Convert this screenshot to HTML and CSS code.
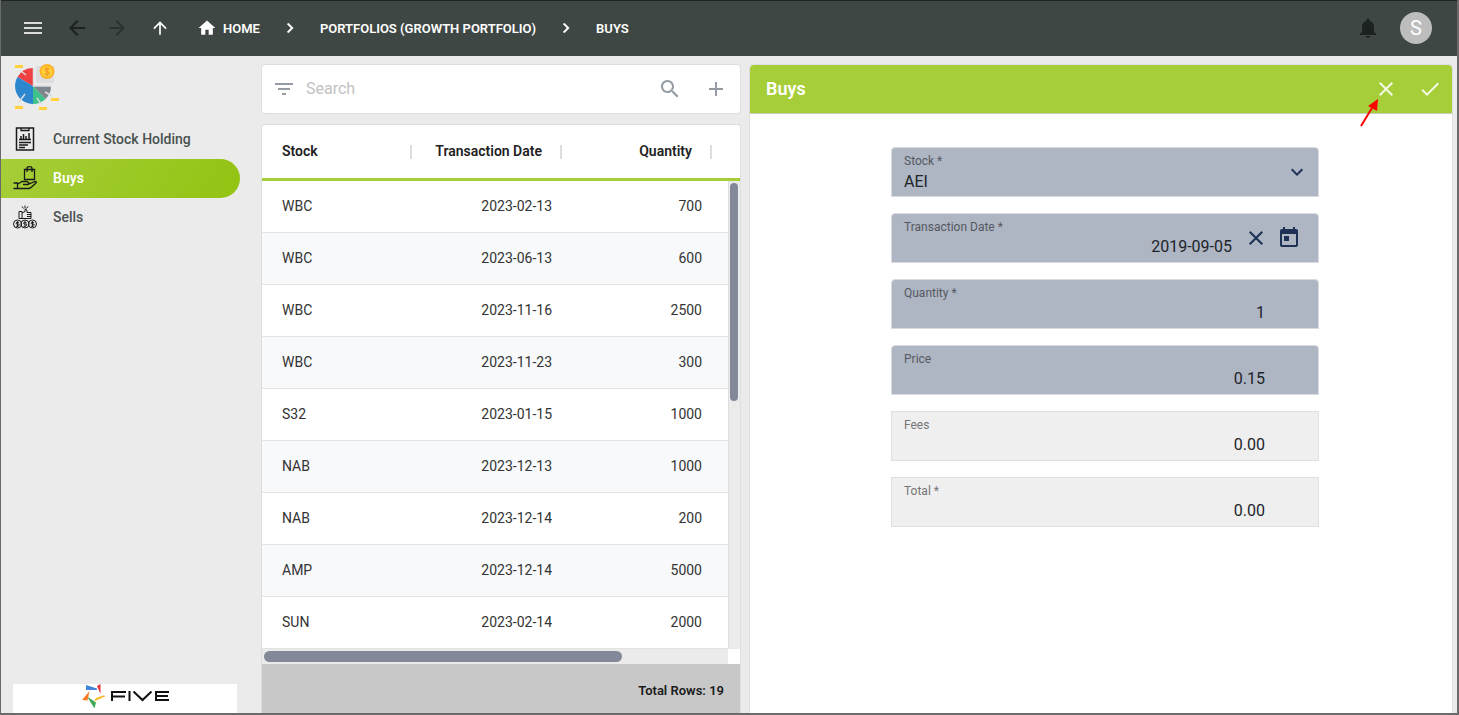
FILE: index.html
```html
<!DOCTYPE html>
<html lang="en">
<head>
<meta charset="utf-8">
<title>Buys</title>
<link rel="stylesheet" href="styles.css">
</head>
<body>
<div class="app">
  <header class="topbar">
    <button class="icon-btn menu" aria-label="Menu"><svg class="i24" viewBox="0 0 24 24"><path d="M3 18h18v-2H3zm0-5h18v-2H3zm0-7v2h18V6z"/></svg></button>
    <button class="icon-btn back" aria-label="Back"><svg class="i24" viewBox="0 0 24 24"><path d="M20 11H7.830l5.590-5.590L12 4l-8 8 8 8 1.410-1.410L7.830 13H20z"/></svg></button>
    <button class="icon-btn forward" aria-label="Forward"><svg class="i24" viewBox="0 0 24 24"><path d="M12 4l-1.410 1.410L16.170 11H4v2h12.170l-5.580 5.590L12 20l8-8z"/></svg></button>
    <button class="icon-btn up" aria-label="Up"><svg class="i20" viewBox="0 0 24 24"><path d="M4 12l1.410 1.410L11 7.830V20h2V7.830l5.580 5.590L20 12l-8-8z"/></svg></button>
    <nav class="crumbs" aria-label="Breadcrumb">
      <a class="home" href="#"><svg class="i20" viewBox="0 0 24 24"><path d="M10 20v-6h4v6h5v-8h3L12 3 2 12h3v8z"/></svg>HOME</a>
      <svg class="i20" viewBox="0 0 24 24"><path d="M10 6L8.590 7.410 13.170 12l-4.580 4.590L10 18l6-6z" stroke="#fff" stroke-width=".5"/></svg>
      <a href="#">PORTFOLIOS (GROWTH PORTFOLIO)</a>
      <svg class="i20" viewBox="0 0 24 24"><path d="M10 6L8.590 7.410 13.170 12l-4.580 4.590L10 18l6-6z" stroke="#fff" stroke-width=".5"/></svg>
      <a href="#">BUYS</a>
    </nav>
    <button class="icon-btn bell" aria-label="Notifications"><svg class="i24" viewBox="0 0 24 24"><path d="M12 22c1.100 0 2-.9 2-2h-4c0 1.100.89 2 2 2zm6-6v-5c0-3.070-1.640-5.640-4.500-6.320V4c0-.83-.67-1.500-1.500-1.500s-1.500.67-1.500 1.500v.68C7.630 5.360 6 7.920 6 11v5l-2 2v1h16v-1z"/></svg></button>
    <button class="avatar">S</button>
  </header>

  <div class="body">
    <aside class="sidebar">
      <svg class="logo" viewBox="0 0 46 48" role="img" aria-label="Portfolio">
        <path fill="#dcdddf" d="M22 2h18v17H22z"/>
        <g fill="#ffd03b"><path d="M1 1h8v3H1zM1 42h8v3H1zM25 43h8v3h-8zM37 34h8v3h-8z"/></g>
        <path fill="#ef4141" d="M19 22V4A18 18 0 0 0 3.500 13z"/>
        <path fill="#2d87cf" d="M19 22L3.500 13A18 18 0 0 0 19 40z"/>
        <path fill="#3cc28a" d="M19 22v18a18 18 0 0 0 12.500-5z"/>
        <path fill="#7c868c" d="M19 22l12.500 13A18 18 0 0 0 37 22z"/>
        <path stroke="#dcdddf" stroke-width="1.500" fill="none" d="M7 7l5 4M5 38l6-8M27 40l-4-6M38 32l-7-4M19.500 4v18H37"/>
        <circle cx="33" cy="7.500" r="7.500" fill="#ffb125"/><circle cx="33" cy="7.500" r="5.500" fill="#ffd03b"/>
        <path d="M35.300 5.500c-.5-1-4.300-1.300-4.300.5 0 2 4.300 1 4.300 3.200 0 1.900-3.800 1.700-4.600.3M33 3v9" fill="none" stroke="#f59a20" stroke-width="1.200"/>
      </svg>
      <nav class="side-nav">
        <a href="#"><svg class="i24 line" viewBox="0 0 24 24"><path stroke-width="1.500" d="M3.500 1h17v22h-17z"/><path stroke-width="1.300" d="M8 1v2.500h8V1"/><path stroke-width="1.500" d="M6 12.500h12M8 12V9M10.500 12V7M13 12V9M16 12V6M6 15.500h12M6 18h9M6 20.500h6"/></svg>Current Stock Holding</a>
        <a href="#" class="active"><svg class="i24 line" viewBox="0 0 24 24"><path stroke-width="1.300" d="M11.500 3.500h10v10h-10zM14 6V2.500Q14 .7 16.500.7T19 2.500V6"/><path stroke-width="1.300" d="M.5 17h4v5.500h-4M5 18l4-2.500h5l2 1.500-1 1.500h-5M15 18.500l7-3q2 0 1 1.500l-5 4.500q-1 1-3 1H5"/></svg>Buys</a>
        <a href="#"><svg class="i24 line" viewBox="0 0 24 24"><path d="M12 .5v3M9 1.500l1.500 2M15 1.500l-1.500 2M6 6.500h3v7H6zM9 8l3-1.500V4.500q2-.5 2 1.500v1.500h4v6H9M14 9.500h4M14 11.500h4"/><circle cx="4.500" cy="19" r="4"/><circle cx="12" cy="19" r="4"/><circle cx="19.500" cy="19" r="4"/><path stroke-width=".9" d="M6 17.500q-3-1-3 .5t2 1 1 1.500-3 .5M4.500 16v6M13.500 17.500q-3-1-3 .5t2 1 1 1.500-3 .5M12 16v6M21 17.500q-3-1-3 .5t2 1 1 1.500-3 .5M19.500 16v6"/></svg>Sells</a>
      </nav>
      <div class="brand">
        <svg viewBox="0 0 88 24" role="img" aria-label="Five">
          <path fill="#4285d8" d="M4 1l11 3.500v1.500H4z"/><path fill="#e53338" d="M15 2l3.500-2v10z"/><path fill="#fbb929" d="M24 12l-12 5.500 2-3.500 7-2.500z"/><path fill="#3da855" d="M5 12.500l9 6-1.500 6z"/><path fill="#fa7a2a" d="M0 16l7.500-9-2 9.500z"/>
          <path fill="none" stroke="#111" stroke-width="2" d="M30 17V8h14M30 12.500h13M47.500 7v10M51.500 7.500l9 8.500 9-8.500M87 8H74v8h13M74 12h12"/>
        </svg>
      </div>
    </aside>

    <main class="list">
      <div class="search card">
        <button class="icon-btn" aria-label="Filter"><svg class="i24" viewBox="0 0 24 24"><path d="M10 18h4v-2h-4zM3 6v2h18V6zm3 7h12v-2H6z"/></svg></button>
        <input type="text" placeholder="Search" aria-label="Search">
        <button class="icon-btn" aria-label="Find"><svg class="i24" viewBox="0 0 24 24"><path d="M15.500 14h-.79l-.28-.27C15.410 12.590 16 11.110 16 9.500 16 5.910 13.090 3 9.500 3S3 5.910 3 9.500 5.910 16 9.500 16c1.610 0 3.090-.59 4.230-1.570l.27.28v.79l5 4.990L20.490 19zm-6 0C7.010 14 5 11.990 5 9.500S7.010 5 9.500 5 14 7.010 14 9.500 11.990 14 9.500 14"/></svg></button>
        <button class="icon-btn add" aria-label="Add"><svg class="i24" viewBox="0 0 24 24"><path d="M19 13h-6v6h-2v-6H5v-2h6V5h2v6h6z"/></svg></button>
      </div>
      <section class="grid card">
        <div class="rows">
          <table>
            <colgroup><col class="c"><col class="c"><col class="c"><col></colgroup>
            <thead><tr><th>Stock</th><th>Transaction Date</th><th>Quantity</th><td></td></tr></thead>
            <tbody>
              <tr><td>WBC</td><td>2023-02-13</td><td>700</td><td></td></tr>
              <tr><td>WBC</td><td>2023-06-13</td><td>600</td><td></td></tr>
              <tr><td>WBC</td><td>2023-11-16</td><td>2500</td><td></td></tr>
              <tr><td>WBC</td><td>2023-11-23</td><td>300</td><td></td></tr>
              <tr><td>S32</td><td>2023-01-15</td><td>1000</td><td></td></tr>
              <tr><td>NAB</td><td>2023-12-13</td><td>1000</td><td></td></tr>
              <tr><td>NAB</td><td>2023-12-14</td><td>200</td><td></td></tr>
              <tr><td>AMP</td><td>2023-12-14</td><td>5000</td><td></td></tr>
              <tr><td>SUN</td><td>2023-02-14</td><td>2000</td><td></td></tr>
            </tbody>
          </table>
          <div class="vscroll"><div class="thumb"></div></div>
        </div>
        <div class="hscroll"><div class="thumb"></div></div>
        <footer class="total">Total Rows: 19</footer>
      </section>
    </main>

    <section class="detail card">
      <header class="detail-head">
        <h1>Buys</h1>
        <button class="icon-btn close" aria-label="Cancel"><svg class="i24" viewBox="0 0 24 24"><path d="M19 6.410L17.590 5 12 10.590 6.410 5 5 6.410 10.590 12 5 17.590 6.410 19 12 13.410 17.590 19 19 17.590 13.410 12z"/></svg>
          <svg class="pointer" viewBox="0 0 20 30"><path d="M2 28L13 10" stroke="#f00" stroke-width="2"/><path d="M19 1l-1 12-9-5z" fill="#f00"/></svg>
        </button>
        <button class="icon-btn" aria-label="Save"><svg class="i24" viewBox="0 0 24 24"><path d="M9 16.170L4.830 12l-1.420 1.410L9 19 21 7l-1.410-1.410z"/></svg></button>
      </header>
      <form class="form">
        <div class="field"><label for="stock">Stock *</label>
          <select id="stock"><option>AEI</option></select>
          <svg class="i24 arrow" viewBox="0 0 24 24"><path d="M16.590 8.590L12 13.170 7.410 8.590 6 10l6 6 6-6z"/></svg></div>
        <div class="field date"><label for="date">Transaction Date *</label>
          <input id="date" type="text" value="2019-09-05">
          <div class="tools">
            <button type="button" class="icon-btn" aria-label="Clear date"><svg class="i24" viewBox="0 0 24 24"><path d="M19 6.410L17.590 5 12 10.590 6.410 5 5 6.410 10.590 12 5 17.590 6.410 19 12 13.410 17.590 19 19 17.590 13.410 12z"/></svg></button>
            <button type="button" class="icon-btn" aria-label="Pick date"><svg class="i24" viewBox="0 0 24 24"><path d="M19 3h-1V1h-2v2H8V1H6v2H5c-1.110 0-1.990.9-1.990 2L3 19c0 1.100.89 2 2 2h14c1.100 0 2-.9 2-2V5c0-1.100-.9-2-2-2m0 16H5V8h14zM7 10h5v5H7z"/></svg></button>
          </div></div>
        <div class="field"><label for="qty">Quantity *</label><input id="qty" type="text" value="1"></div>
        <div class="field"><label for="price">Price</label><input id="price" type="text" value="0.15"></div>
        <div class="field plain"><label for="fees">Fees</label><input id="fees" type="text" value="0.00" readonly></div>
        <div class="field plain"><label for="total">Total *</label><input id="total" type="text" value="0.00" readonly></div>
      </form>
    </section>
  </div>
</div>
</body>
</html>
```
FILE: styles.css
```css
* { box-sizing: border-box; }
body { margin: 0; font-family: Roboto, "Liberation Sans", sans-serif; font-size: 14px; color: #333; background: #ebebeb; }
a { color: inherit; text-decoration: none; }
button, input, select { font: inherit; color: inherit; border: 0; background: none; padding: 0; margin: 0; outline: 0; }
svg { display: block; flex: none; fill: currentColor; }
.i24 { width: 24px; height: 24px; }
.i20 { width: 20px; height: 20px; }
.line { fill: none; stroke: #1a1a1a; }
.icon-btn { display: flex; flex: none; }

.app { height: 100vh; display: flex; flex-direction: column; border: solid #6a6a6a; border-width: 0 2px 2px 1px; overflow: hidden; }
.topbar { flex: none; height: 56px; display: flex; align-items: center; padding: 0 25px 1px 20px; background: #3f4744; border-top: 1px solid #222; color: #fff; }
.menu { color: #d9dbda; margin-right: 20px; }
.back { color: #1d211f; margin-right: 16px; }
.forward { color: #2c3230; margin-right: 21px; }
.up { margin-right: 27px; }
.crumbs { flex: 1; display: flex; align-items: center; font-size: 13px; font-weight: 600; }
.crumbs > svg { margin: 0 20px; }
.home { display: flex; align-items: center; gap: 6px; }
.bell { color: #1d211f; margin-right: 20px; }
.avatar { width: 32px; height: 32px; border-radius: 50%; background: #bdbdbd; font-size: 20px; line-height: 32px; text-align: center; color: #fff; }

.body { flex: 1; min-height: 0; display: grid; grid-template-columns: 252px minmax(0, 15fr) minmax(0, 22fr); gap: 8px; padding-right: 4px; }
.card { background: #fff; border: 1px solid #dedede; border-radius: 4px; }

.sidebar { display: flex; flex-direction: column; min-height: 0; }
.logo { width: 46px; height: 48px; margin: 8px 0 8px 13px; }
.side-nav a { display: flex; align-items: center; gap: 16px; width: 239px; height: 39px; padding: 0 0 1px 12px; font-weight: 500; color: #4a5250; }
.side-nav .active { background: linear-gradient(120deg, #a6ce39, #93c312); border-radius: 0 20px 20px 0; color: #fff; font-weight: 600; }
.brand { margin: auto 16px 0 12px; height: 29px; padding-left: 1px; background: #fff; display: flex; justify-content: center; }
.brand svg { width: 88px; height: 24px; }

.list { display: flex; flex-direction: column; gap: 10px; padding-top: 8px; min-height: 0; }
.search { flex: none; height: 50px; display: flex; align-items: center; padding: 0 12px 0 10px; color: #959ba3; }
.search input { flex: 1; min-width: 0; margin-left: 10px; padding-bottom: 2px; font-size: 16px; }
.search input::placeholder { color: #c2c2c2; opacity: 1; }
.add { margin-left: 22px; }
.grid { flex: 1; min-height: 0; display: flex; flex-direction: column; border-bottom: 0; border-radius: 4px 4px 0 0; overflow: hidden; }
.rows { flex: 1; min-height: 0; position: relative; overflow: hidden; }
table { width: 100%; table-layout: fixed; border-collapse: separate; border-spacing: 0; }
.c { width: 150px; }
thead > tr > * { height: 56px; padding: 0 20px 2px 0; border-bottom: 3px solid #a6ce39; text-align: right; font-weight: 600; color: #222;
  background: linear-gradient(#dedede, #dedede) right center / 2px 14px no-repeat; }
thead td { background: none; }
tbody td { height: 52px; padding: 0 10px 2px 0; border-bottom: 1px solid #e2e2e2; text-align: right; }
th:first-child, td:first-child { text-align: left; padding-left: 20px; }
tbody tr:nth-child(even) { background: #f8f9fb; }
.vscroll { position: absolute; top: 56px; right: 0; bottom: 0; width: 12px; padding: 2px 1px; background: #ebebeb; border-left: 1px solid #dedede; }
.thumb { background: #838999; border-radius: 6px; }
.vscroll .thumb { width: 8px; height: 218px; }
.hscroll { flex: none; height: 15px; margin-right: 12px; padding: 2px; background: #ebebeb; }
.hscroll .thumb { width: 358px; height: 11px; }
.total { flex: none; height: 49px; padding: 0 16px; background: #c8c8c8; font-size: 13px; line-height: 54px; font-weight: 600; text-align: right; color: #1c1c1c; }

.detail { margin-top: 8px; border-bottom: 0; border-radius: 4px 4px 0 0; }
.detail-head { display: flex; align-items: center; height: 49px; padding: 0 10px 0 16px; background: #a6ce39; border-bottom: 1px solid #c9ccc0; border-radius: 4px 4px 0 0; color: #f4f9e4; }
h1 { flex: 1; margin: 0; padding-bottom: 2px; font-size: 18px; font-weight: 600; color: #fff; }
.close { position: relative; margin-right: 20px; }
.pointer { position: absolute; top: 21px; left: -15px; width: 20px; height: 30px; }
.form { display: flex; flex-direction: column; gap: 16px; max-width: 436px; margin: 33px auto 0; padding-left: 8px; }
.field { position: relative; height: 50px; padding: 6px 12px 0; background: #aeb5c3; border: 1px solid #d9dbe0; border-radius: 4px 4px 0 0; color: #20242a; }
.field label { display: block; font-size: 12px; line-height: 14px; color: #555a62; }
.field input, .field select { display: block; width: 100%; height: 22px; margin-top: 2px; font-size: 16px; line-height: 22px; appearance: none; }
.field select { height: 24px; }
.field input { padding-right: 41px; text-align: right; }
.date input { padding-right: 74px; }
.arrow, .tools { position: absolute; top: 12px; right: 9px; color: #1c3154; }
.tools { right: 17px; display: flex; gap: 9px; }
.plain { background: #efefef; border-color: #e0e0e0; border-radius: 0; }
.plain label { color: #757575; }
```
